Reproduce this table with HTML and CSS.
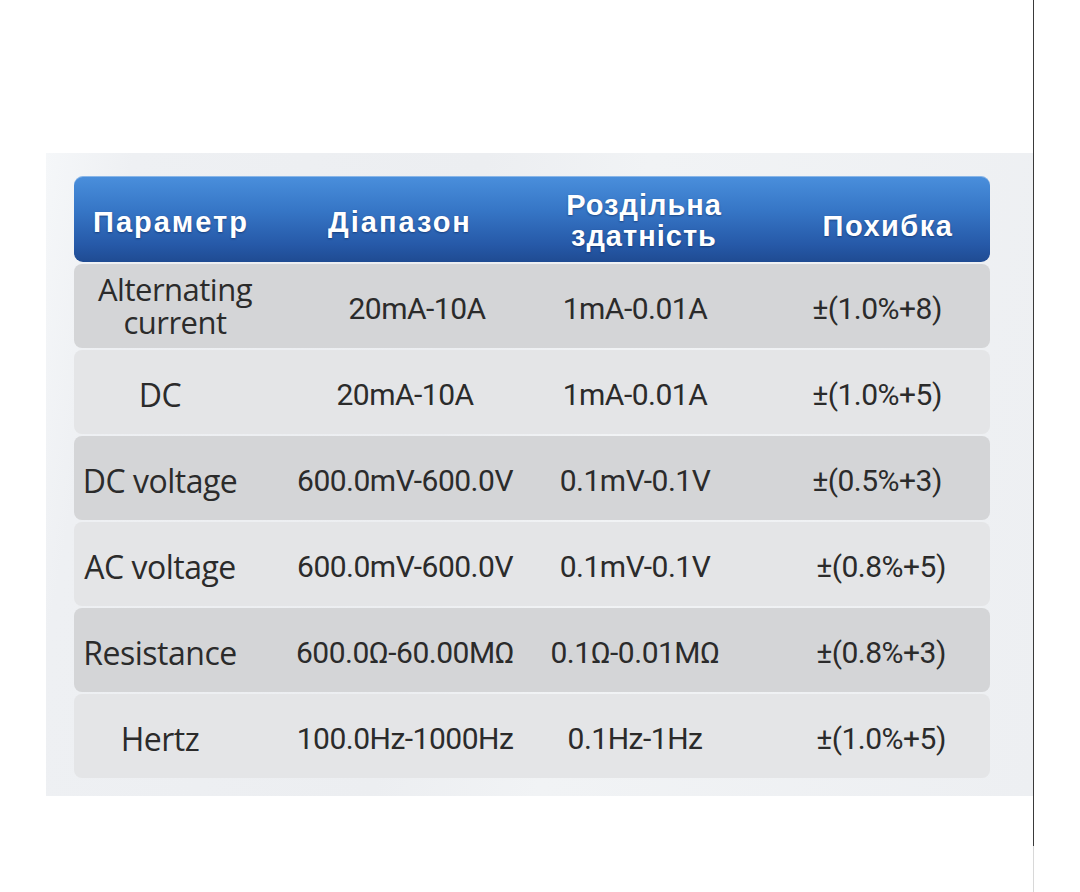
FILE: index.html
```html
<!DOCTYPE html>
<html lang="uk">
<head>
<meta charset="utf-8">
<title>Характеристики</title>
<link rel="stylesheet" href="styles.css">
</head>
<body>
<div class="frame">
  <div class="frame-top">
    <div class="panel">
      <div class="head">
        <div class="hcell h1">Параметр</div>
        <div class="hcell h2">Діапазон</div>
        <div class="hcell h3"><span>Роздільна</span><span>здатність</span></div>
        <div class="hcell h4">Похибка</div>
      </div>
      <div class="row dark">
        <div class="cell c1 label two"><span class="ln">Alternating</span><span class="ln">current</span></div>
        <div class="cell c2 r1">20mA-10A</div>
        <div class="cell c3">1mA-0.01A</div>
        <div class="cell c4">±(1.0%+8)</div>
      </div>
      <div class="row light">
        <div class="cell c1 label">DC</div>
        <div class="cell c2">20mA-10A</div>
        <div class="cell c3">1mA-0.01A</div>
        <div class="cell c4">±(1.0%+5)</div>
      </div>
      <div class="row dark">
        <div class="cell c1 label">DC voltage</div>
        <div class="cell c2">600.0mV-600.0V</div>
        <div class="cell c3">0.1mV-0.1V</div>
        <div class="cell c4">±(0.5%+3)</div>
      </div>
      <div class="row light">
        <div class="cell c1 label">AC voltage</div>
        <div class="cell c2">600.0mV-600.0V</div>
        <div class="cell c3">0.1mV-0.1V</div>
        <div class="cell c4 shift">±(0.8%+5)</div>
      </div>
      <div class="row dark">
        <div class="cell c1 label">Resistance</div>
        <div class="cell c2">600.0Ω-60.00MΩ</div>
        <div class="cell c3">0.1Ω-0.01MΩ</div>
        <div class="cell c4 shift">±(0.8%+3)</div>
      </div>
      <div class="row light">
        <div class="cell c1 label">Hertz</div>
        <div class="cell c2">100.0Hz-1000Hz</div>
        <div class="cell c3">0.1Hz-1Hz</div>
        <div class="cell c4 shift">±(1.0%+5)</div>
      </div>
    </div>
  </div>
  <div class="frame-bottom"></div>
</div>
</body>
</html>
```

FILE: styles.css
```css
html, body {
  margin: 0;
  padding: 0;
  background: #ffffff;
}

body {
  width: 1080px;
  height: 892px;
  overflow: hidden;
  font-family: "Roboto", "Liberation Sans", sans-serif;
}

.frame {
  width: 1034px;
  display: flex;
  flex-direction: column;
}

.frame-top {
  height: 846px;
  box-sizing: border-box;
  border-right: 1px solid #3a3a3a;
  padding-top: 153px;
  padding-left: 46px;
}

.frame-bottom {
  height: 46px;
  box-sizing: border-box;
  border-right: 1px solid #d8d8d8;
}

.panel {
  width: 987px;
  height: 643px;
  box-sizing: border-box;
  padding: 23px 0 0 28px;
  background: linear-gradient(100deg, #f5f7f9 0%, #eef0f3 8%, #eceef1 40%, #f1f3f5 55%, #edeff2 100%);
  display: flex;
  flex-direction: column;
  gap: 2px;
}

.head {
  width: 916px;
  height: 86px;
  box-sizing: border-box;
  border-radius: 9px;
  background: linear-gradient(180deg, #4a8fdc 0%, #3676c6 40%, #2659a8 80%, #1f4b92 100%);
  box-shadow: inset 0 1px 0 rgba(255,255,255,0.35);
  display: grid;
  grid-template-columns: 194px 264px 224px 234px;
  font-family: "Liberation Sans", Arial, sans-serif;
  font-weight: bold;
  font-size: 29px;
  letter-spacing: 2px;
  color: #ffffff;
  text-shadow: 0 1px 2px rgba(0, 20, 60, 0.45);
}

.hcell {
  display: flex;
  flex-direction: column;
  align-items: center;
  justify-content: center;
  text-align: center;
  padding-top: 6px;
  white-space: nowrap;
}

.h3 {
  line-height: 31px;
  letter-spacing: 1px;
  padding-top: 4px;
}

.h4 {
  padding-left: 30px;
  padding-top: 14px;
  letter-spacing: 1.5px;
}

.row {
  width: 916px;
  height: 84px;
  border-radius: 8px;
  display: grid;
  grid-template-columns: 172px 318px 142px 284px;
  color: #2b2b2b;
  font-size: 30px;
  letter-spacing: -0.5px;
}

.row.dark {
  background: #d4d5d7;
}

.row.light {
  background: #e4e5e7;
}

.cell {
  display: flex;
  flex-direction: column;
  align-items: center;
  justify-content: center;
  text-align: center;
  white-space: nowrap;
  padding-top: 4px;
}

.label {
  font-family: "Open Sans", "Noto Sans", sans-serif;
  font-size: 32px;
  letter-spacing: -0.5px;
}

.two {
  font-size: 31px;
  padding-left: 30px;
  padding-top: 0;
}

.ln {
  display: block;
  height: 33px;
  line-height: 33px;
}

.c2.r1 {
  padding-left: 24px;
}

.c4 {
  padding-left: 58px;
}

.c4.shift {
  padding-left: 66px;
}
```
